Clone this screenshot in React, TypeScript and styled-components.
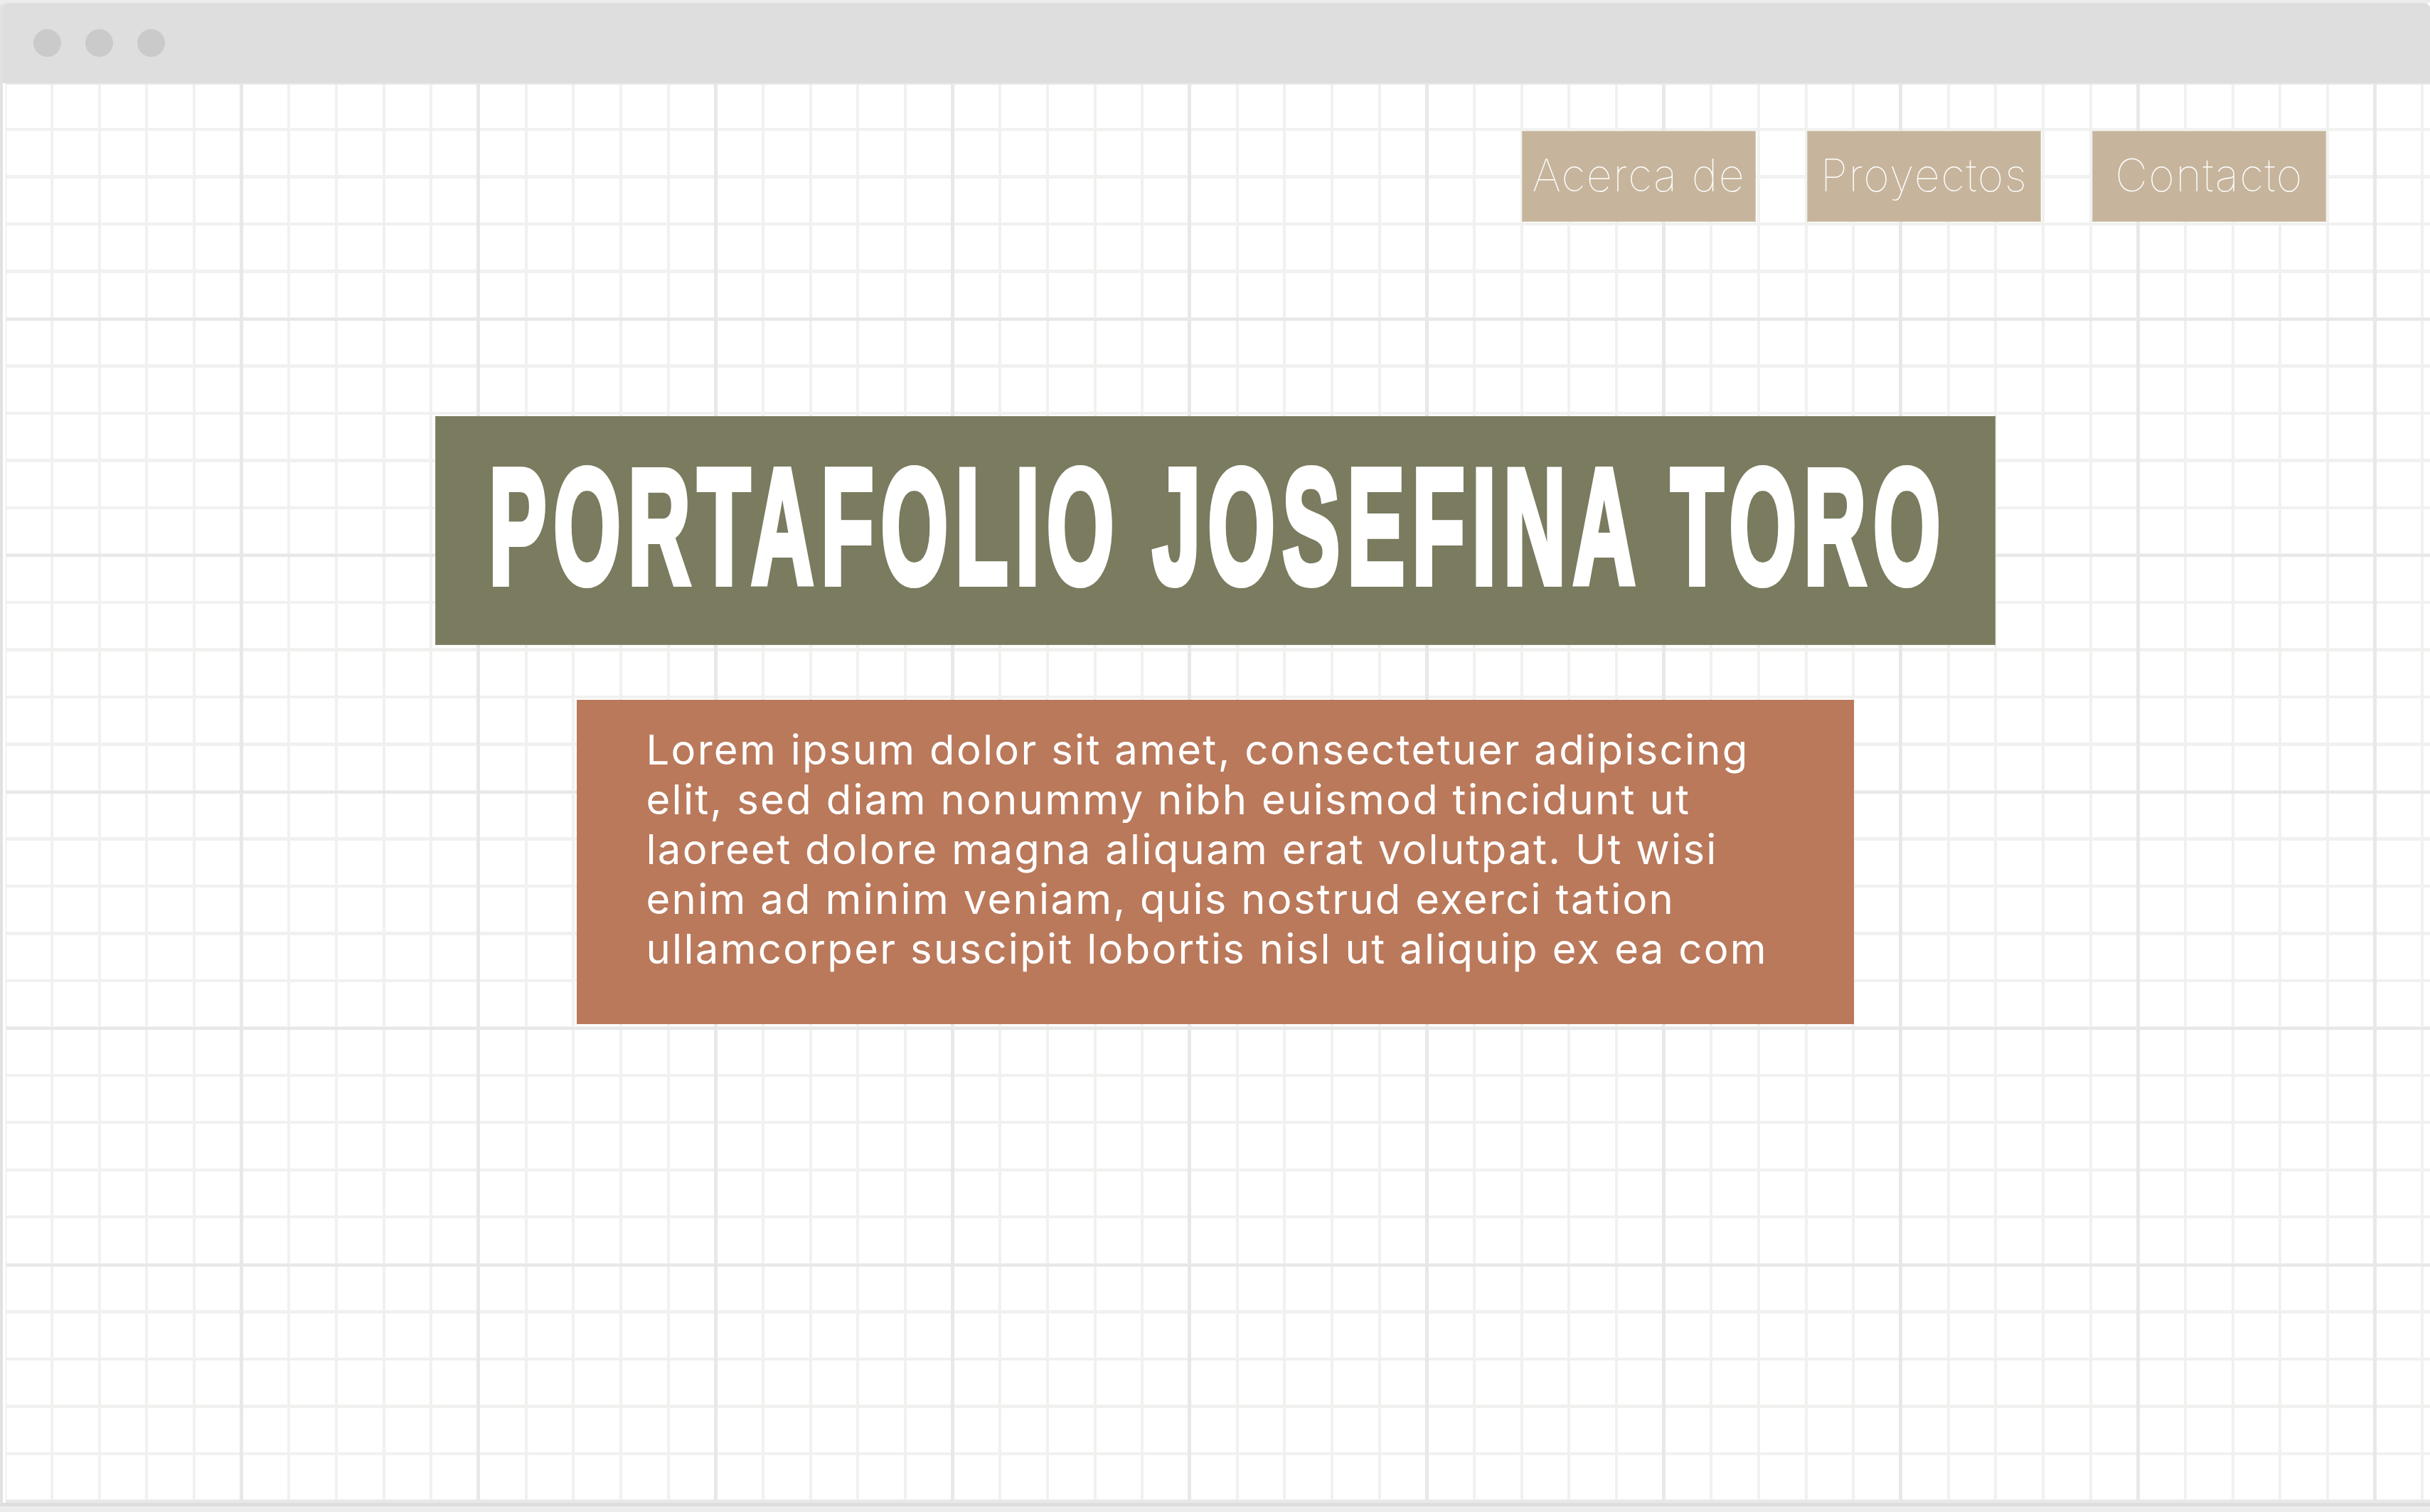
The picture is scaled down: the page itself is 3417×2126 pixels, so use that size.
import React from "react";
import styled, { createGlobalStyle } from "styled-components";

const GlobalStyle = createGlobalStyle`
  html, body {
    margin: 0;
    padding: 0;
  }
  body {
    background: #ececec;
    width: 3417px;
    height: 2126px;
    overflow: hidden;
    font-family: "Inter", "Liberation Sans", sans-serif;
  }
`;

const Window = styled.div`
  box-sizing: border-box;
  margin-top: 4px;
  width: 3417px;
  height: 2114px;
  border-left: 4px solid #e2e2e2;
  border-bottom: 5px solid #dedede;
  border-top-left-radius: 8px;
  display: flex;
  flex-direction: column;
  background: #ffffff;
  overflow: hidden;
`;

const TitleBar = styled.div`
  flex: 0 0 113px;
  background: #dedede;
  display: flex;
  align-items: center;
  gap: 34px;
  padding-left: 43px;
  border-top-left-radius: 6px;
  border-top-right-radius: 8px;
`;

const Dot = styled.span`
  width: 39px;
  height: 39px;
  border-radius: 50%;
  background: #cacaca;
`;

const minor = "#f1f1f0";
const major = "#e8e8e8";

const Canvas = styled.main`
  flex: 1;
  display: flex;
  flex-direction: column;
  border-left: 4px solid #ffffff;
  background-color: #ffffff;
  background-clip: padding-box;
  background-image:
    repeating-linear-gradient(to right, ${major} 0 0.667px, transparent 0.667px 329px, ${major} 329px 333.333px),
    repeating-linear-gradient(to bottom, ${major} 0 1.5px, transparent 1.5px 330px, ${major} 330px 332.5px),
    repeating-linear-gradient(to right, ${minor} 0 0.333px, transparent 0.333px 63px, ${minor} 63px 66.667px),
    repeating-linear-gradient(to bottom, ${minor} 0 0.5px, transparent 0.5px 63px, ${minor} 63px 66.5px);
`;

const Nav = styled.nav`
  display: flex;
  justify-content: flex-end;
  gap: 72px;
  padding: 67px 146px 0 0;
`;

const NavButton = styled.a`
  box-sizing: border-box;
  width: 329px;
  height: 128px;
  display: flex;
  align-items: center;
  justify-content: center;
  padding-bottom: 4px;
  background: #c6b59c;
  border: 1px solid #d6cab7;
  color: #ffffff;
  font-family: "Inter", "Lato", sans-serif;
  font-weight: 100;
  font-size: 63px;
  letter-spacing: 1.5px;
  text-decoration: none;
  white-space: nowrap;
`;

const Hero = styled.section`
  margin-top: 273px;
  padding-right: 8px;
  display: flex;
  flex-direction: column;
  align-items: center;
  gap: 77px;
`;

const TitleBox = styled.div`
  box-sizing: border-box;
  width: 2194px;
  height: 322px;
  padding-top: 40px;
  padding-left: 10px;
  background: #7a7b5f;
  border: 1px solid #8c8d76;
  display: flex;
  justify-content: center;
  align-items: flex-start;
`;

const Title = styled.h1`
  margin: 0;
  flex-shrink: 0;
  font-family: "Liberation Sans", Arial, sans-serif;
  font-weight: 700;
  font-size: 230px;
  line-height: 1;
  letter-spacing: 20px;
  color: #ffffff;
  -webkit-text-stroke: 10px #ffffff;
  white-space: nowrap;
  transform: scaleX(0.526);
  transform-origin: center;
`;

const TextBox = styled.div`
  box-sizing: border-box;
  width: 1796px;
  height: 456px;
  padding: 35px 0 0 98px;
  background: #ba795b;
`;

const Line = styled.span`
  display: block;
  font-family: "Inter", "Liberation Sans", sans-serif;
  font-weight: 400;
  font-size: 58px;
  line-height: 70px;
  letter-spacing: 2.3px;
  color: #ffffff;
  white-space: nowrap;
`;

const lines = [
  "Lorem ipsum dolor sit amet, consectetuer adipiscing",
  "elit, sed diam nonummy nibh euismod tincidunt ut",
  "laoreet dolore magna aliquam erat volutpat. Ut wisi",
  "enim ad minim veniam, quis nostrud exerci tation",
  "ullamcorper suscipit lobortis nisl ut aliquip ex ea com",
];

export default function App() {
  return (
    <>
      <GlobalStyle />
      <Window>
        <TitleBar>
          <Dot />
          <Dot />
          <Dot />
        </TitleBar>
        <Canvas>
          <Nav>
            <NavButton>Acerca de</NavButton>
            <NavButton>Proyectos</NavButton>
            <NavButton>Contacto</NavButton>
          </Nav>
          <Hero>
            <TitleBox>
              <Title>PORTAFOLIO JOSEFINA TORO</Title>
            </TitleBox>
            <TextBox>
              {lines.map((l) => (
                <Line key={l}>{l}</Line>
              ))}
            </TextBox>
          </Hero>
        </Canvas>
      </Window>
    </>
  );
}
